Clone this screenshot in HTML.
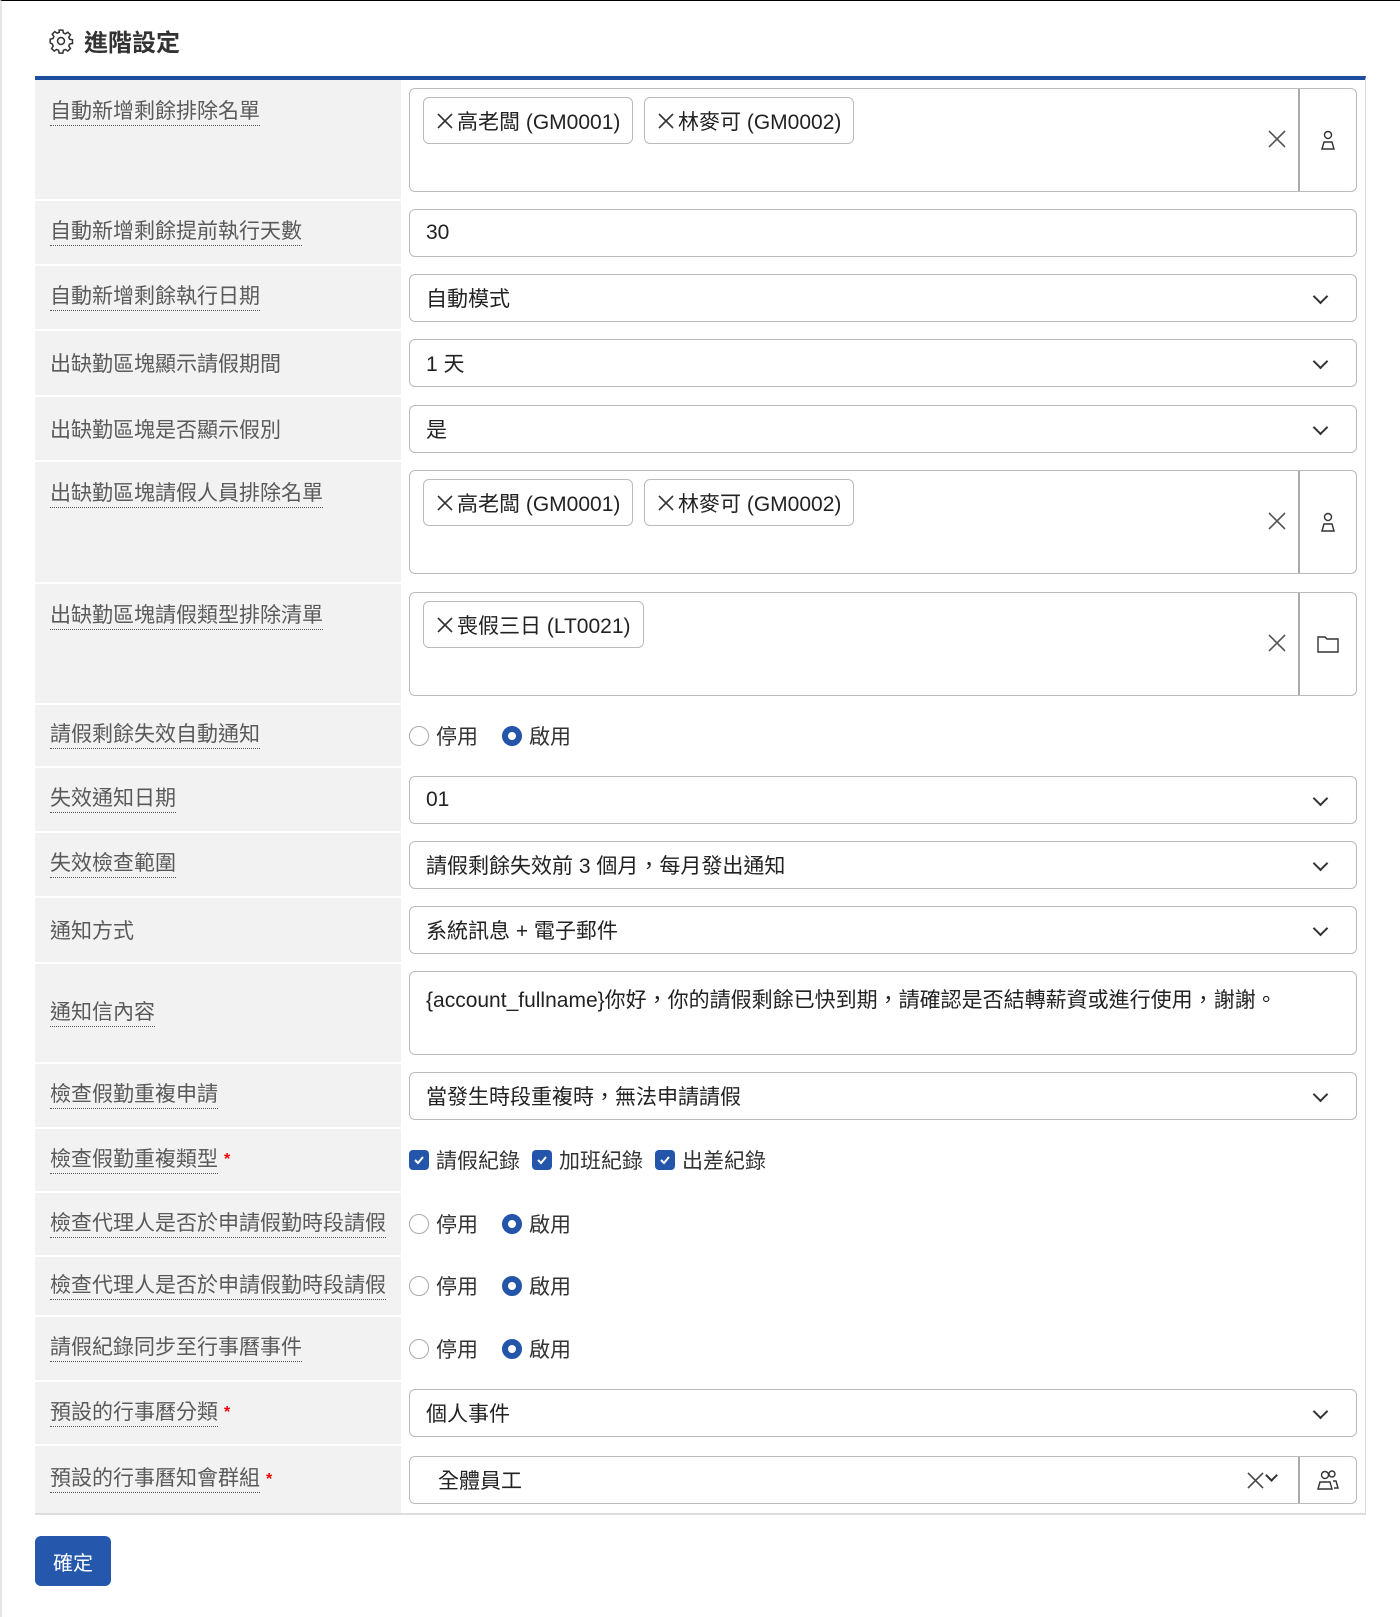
<!DOCTYPE html>
<html><head><meta charset="utf-8"><style>
*{box-sizing:border-box;margin:0;padding:0}
body{width:1400px;height:1617px;background:#fff;font-family:"Liberation Sans","Noto Sans CJK TC",sans-serif;color:#222;position:relative;overflow:hidden;border-top:1px solid #000;border-left:2px solid #e6e6e6}
.hdr{position:absolute;left:46px;top:22px;font-size:24px;font-weight:bold;color:#333;display:flex;align-items:center;gap:10px}
.tbl{position:absolute;left:33px;top:75px;width:1331px;border-top:4px solid #1e4d9e;border-right:1px solid #ddd;border-bottom:2px solid #ddd}
.row{display:flex;border-bottom:2px solid #fff}
.lab{width:366px;background:#f2f2f2;padding-left:15px;display:flex;align-items:center;font-size:21px;color:#5a5a5a;flex:none}
.lab.top{align-items:flex-start;padding-top:19px}
.lab span{border-bottom:1px dotted #555;line-height:26px}
.req{color:#e00;margin-left:6px;font-size:16px}
.val{flex:1;padding:8px 8px 8px 8px;display:flex;align-items:center}
.box{width:100%;height:48px;border:1px solid #bbb;border-radius:6px;display:flex;align-items:center;padding-left:16px;font-size:21px;position:relative}
.sel::after{content:"";position:absolute;right:30px;top:16px;width:9px;height:9px;border-right:2px solid #333;border-bottom:2px solid #333;transform:rotate(45deg)}
.multi{width:100%;height:104px;border:1px solid #bbb;border-radius:6px;position:relative;align-self:flex-start}
.tag{position:absolute;top:8px;height:47px;border:1px solid #bbb;border-radius:6px;font-size:21px;display:flex;align-items:center;padding:0 12px 0 12px}
.x{display:inline-block;width:18px;height:18px;margin-right:3px}
.clr{position:absolute;right:70px;top:41px}
.btn{position:absolute;right:0;top:0;bottom:0;width:58px;border-left:2px solid #aaa;display:flex;align-items:center;justify-content:center}
.rad{display:flex;align-items:center;font-size:21px;color:#333}
.r{width:20px;height:20px;border-radius:50%;border:1px solid #aaa;margin-right:7px}
.r.on{border:6px solid #2356ab}
.cb{width:20px;height:20px;border-radius:4px;background:#2356ab;margin-right:7px;display:flex;align-items:center;justify-content:center}
.ok{position:absolute;left:33px;top:1535px;width:76px;height:50px;background:#2557ad;border-radius:6px;color:#fff;font-size:20px;display:flex;align-items:center;justify-content:center}
</style></head><body>
<div class="hdr"><svg width="26" height="26" viewBox="0 0 24 24" fill="none" stroke="#333" stroke-width="1.4"><circle cx="12" cy="12" r="3.2"/><path d="M10.3 2h3.4l.5 2.6 1.9.8 2.2-1.5 2.4 2.4-1.5 2.2.8 1.9 2.6.5v3.4l-2.6.5-.8 1.9 1.5 2.2-2.4 2.4-2.2-1.5-1.9.8-.5 2.6h-3.4l-.5-2.6-1.9-.8-2.2 1.5-2.4-2.4 1.5-2.2-.8-1.9L2 13.7v-3.4l2.6-.5.8-1.9-1.5-2.2 2.4-2.4 2.2 1.5 1.9-.8z"/></svg>進階設定</div>
<div class="tbl">
<div class="row" style="height:121px"><div class="lab top"><span>自動新增剩餘排除名單</span></div><div class="val" style="align-items:flex-start"><div class="multi"><div class="tag" style="left:13px"><svg class="x" viewBox="0 0 18 18"><path d="M2 2l14 14M16 2L2 16" stroke="#333" stroke-width="1.6"/></svg>高老闆 (GM0001)</div><div class="tag" style="left:234px"><svg class="x" viewBox="0 0 18 18"><path d="M2 2l14 14M16 2L2 16" stroke="#333" stroke-width="1.6"/></svg>林麥可 (GM0002)</div><svg class="clr" width="18" height="18" viewBox="0 0 18 18"><path d="M1 1l16 16M17 1L1 17" stroke="#555" stroke-width="1.6"/></svg><div class="btn"><svg width="22" height="22" viewBox="0 0 22 22" fill="none" stroke="#333" stroke-width="1.4"><circle cx="11" cy="6" r="3.5"/><path d="M5 20l2-7h8l2 7z"/></svg></div></div></div></div>
<div class="row" style="height:65px"><div class="lab"><span>自動新增剩餘提前執行天數</span></div><div class="val"><div class="box">30</div></div></div>
<div class="row" style="height:65px"><div class="lab"><span>自動新增剩餘執行日期</span></div><div class="val"><div class="box sel">自動模式</div></div></div>
<div class="row" style="height:66px"><div class="lab">出缺勤區塊顯示請假期間</div><div class="val"><div class="box sel">1 天</div></div></div>
<div class="row" style="height:65px"><div class="lab">出缺勤區塊是否顯示假別</div><div class="val"><div class="box sel">是</div></div></div>
<div class="row" style="height:122px"><div class="lab top"><span>出缺勤區塊請假人員排除名單</span></div><div class="val" style="align-items:flex-start"><div class="multi"><div class="tag" style="left:13px"><svg class="x" viewBox="0 0 18 18"><path d="M2 2l14 14M16 2L2 16" stroke="#333" stroke-width="1.6"/></svg>高老闆 (GM0001)</div><div class="tag" style="left:234px"><svg class="x" viewBox="0 0 18 18"><path d="M2 2l14 14M16 2L2 16" stroke="#333" stroke-width="1.6"/></svg>林麥可 (GM0002)</div><svg class="clr" width="18" height="18" viewBox="0 0 18 18"><path d="M1 1l16 16M17 1L1 17" stroke="#555" stroke-width="1.6"/></svg><div class="btn"><svg width="22" height="22" viewBox="0 0 22 22" fill="none" stroke="#333" stroke-width="1.4"><circle cx="11" cy="6" r="3.5"/><path d="M5 20l2-7h8l2 7z"/></svg></div></div></div></div>
<div class="row" style="height:121px"><div class="lab top"><span>出缺勤區塊請假類型排除清單</span></div><div class="val" style="align-items:flex-start"><div class="multi"><div class="tag" style="left:13px"><svg class="x" viewBox="0 0 18 18"><path d="M2 2l14 14M16 2L2 16" stroke="#333" stroke-width="1.6"/></svg>喪假三日 (LT0021)</div><svg class="clr" width="18" height="18" viewBox="0 0 18 18"><path d="M1 1l16 16M17 1L1 17" stroke="#555" stroke-width="1.6"/></svg><div class="btn"><svg width="24" height="22" viewBox="0 0 24 22" fill="none" stroke="#333" stroke-width="1.4"><path d="M2 4h7l2 2h11v13H2z"/></svg></div></div></div></div>
<div class="row" style="height:63px"><div class="lab"><span>請假剩餘失效自動通知</span></div><div class="val"><div class="rad"><div class="r"></div>停用<div class="r on" style="margin-left:24px"></div>啟用</div></div></div>
<div class="row" style="height:65px"><div class="lab"><span>失效通知日期</span></div><div class="val"><div class="box sel">01</div></div></div>
<div class="row" style="height:65px"><div class="lab"><span>失效檢查範圍</span></div><div class="val"><div class="box sel">請假剩餘失效前 3 個月，每月發出通知</div></div></div>
<div class="row" style="height:66px"><div class="lab">通知方式</div><div class="val"><div class="box sel">系統訊息 + 電子郵件</div></div></div>
<div class="row" style="height:100px"><div class="lab"><span>通知信內容</span></div><div class="val"><div class="box" style="height:84px;align-items:flex-start;padding-top:12px">{account_fullname}你好，你的請假剩餘已快到期，請確認是否結轉薪資或進行使用，謝謝。</div></div></div>
<div class="row" style="height:65px"><div class="lab"><span>檢查假勤重複申請</span></div><div class="val"><div class="box sel">當發生時段重複時，無法申請請假</div></div></div>
<div class="row" style="height:64px"><div class="lab"><span>檢查假勤重複類型</span><b class="req">*</b></div><div class="val"><div class="rad"><div class="cb"><svg width="12" height="10" viewBox="0 0 12 10"><path d="M2 5l3 3 5-6" stroke="#fff" stroke-width="2" fill="none"/></svg></div>請假紀錄<div class="cb" style="margin-left:12px"><svg width="12" height="10" viewBox="0 0 12 10"><path d="M2 5l3 3 5-6" stroke="#fff" stroke-width="2" fill="none"/></svg></div>加班紀錄<div class="cb" style="margin-left:12px"><svg width="12" height="10" viewBox="0 0 12 10"><path d="M2 5l3 3 5-6" stroke="#fff" stroke-width="2" fill="none"/></svg></div>出差紀錄</div></div></div>
<div class="row" style="height:64px"><div class="lab"><span>檢查代理人是否於申請假勤時段請假</span></div><div class="val"><div class="rad"><div class="r"></div>停用<div class="r on" style="margin-left:24px"></div>啟用</div></div></div>
<div class="row" style="height:60px"><div class="lab"><span>檢查代理人是否於申請假勤時段請假</span></div><div class="val"><div class="rad"><div class="r"></div>停用<div class="r on" style="margin-left:24px"></div>啟用</div></div></div>
<div class="row" style="height:65px"><div class="lab"><span>請假紀錄同步至行事曆事件</span></div><div class="val"><div class="rad"><div class="r"></div>停用<div class="r on" style="margin-left:24px"></div>啟用</div></div></div>
<div class="row" style="height:64px"><div class="lab"><span>預設的行事曆分類</span><b class="req">*</b></div><div class="val"><div class="box sel">個人事件</div></div></div>
<div class="row" style="height:67px;border-bottom:0"><div class="lab"><span>預設的行事曆知會群組</span><b class="req">*</b></div><div class="val"><div class="box" style="padding-left:28px">全體員工<svg style="position:absolute;right:92px;top:15px" width="17" height="17" viewBox="0 0 18 18"><path d="M1 1l16 16M17 1L1 17" stroke="#444" stroke-width="1.6"/></svg><span style="position:absolute;right:80px;top:14px;width:9px;height:9px;border-right:2px solid #333;border-bottom:2px solid #333;transform:rotate(45deg)"></span><div class="btn"><svg width="26" height="22" viewBox="0 0 26 22" fill="none" stroke="#333" stroke-width="1.4"><circle cx="10" cy="6" r="3.5"/><path d="M3 20l2-7h10l2 7z"/><circle cx="17" cy="5" r="3"/><path d="M18 12h3l2 7h-4"/></svg></div></div></div></div>
</div>
<div class="ok">確定</div>
</body></html>
